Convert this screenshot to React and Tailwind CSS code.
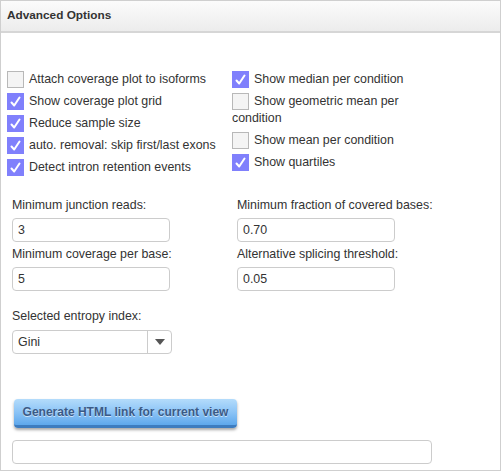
import React from "react";

const font = { fontFamily: '"Liberation Sans", Arial, sans-serif' };

function Check({ checked, label }) {
  return (
    <div className="text-[12.4px] leading-[17px] text-[#333] mb-[5px]">
      {checked ? (
        <span className="inline-flex align-top w-[17px] h-[17px] bg-[#8080fc] items-center justify-center mr-[5px]">
          <svg viewBox="0 0 17 17" className="w-[17px] h-[17px]">
            <path d="M4.5 9.5 L7.2 12.5 L12.5 4.5" fill="none" stroke="#fff" strokeWidth="2" strokeLinecap="round" strokeLinejoin="round" />
          </svg>
        </span>
      ) : (
        <span className="inline-block align-top w-[17px] h-[17px] bg-[#f4f4f4] border border-[#b8b8b8] mr-[5px]" />
      )}
      {label}
    </div>
  );
}

function Field({ label, value }) {
  return (
    <div className="mb-[5px]">
      <div className="text-[12.4px] leading-[15px] text-[#333] mb-[5px]">{label}</div>
      <div className="w-[158px] h-[24px] border border-[#ccc] rounded-[4px] px-[5px] flex items-center text-[12.4px] text-[#333] bg-white">
        {value}
      </div>
    </div>
  );
}

export default function App() {
  return (
    <div style={font} className="w-[501px] h-[471px] bg-white border border-[#cfcfcf] flex flex-col">
      <div className="h-[32px] border-b-2 border-[#d6d6d6] bg-gradient-to-b from-[#fbfbfb] to-[#ececec] flex items-center px-[6px]">
        <span className="text-[11.8px] font-bold text-[#333]">Advanced Options</span>
      </div>

      <div className="flex pt-[38px] pl-[6px]">
        <div className="w-[225px]">
          <Check label="Attach coverage plot to isoforms" />
          <Check checked label="Show coverage plot grid" />
          <Check checked label="Reduce sample size" />
          <Check checked label="auto. removal: skip first/last exons" />
          <Check checked label="Detect intron retention events" />
        </div>
        <div className="w-[212px]">
          <Check checked label="Show median per condition" />
          <Check label="Show geometric mean per condition" />
          <Check label="Show mean per condition" />
          <Check checked label="Show quartiles" />
        </div>
      </div>

      <div className="flex pl-[11px] pt-[17px]">
        <div className="w-[225px]">
          <Field label="Minimum junction reads:" value="3" />
          <Field label="Minimum coverage per base:" value="5" />
        </div>
        <div>
          <Field label="Minimum fraction of covered bases:" value="0.70" />
          <Field label="Alternative splicing threshold:" value="0.05" />
        </div>
      </div>

      <div className="pl-[11px] pt-[13px]">
        <div className="text-[12.4px] leading-[15px] text-[#333] mb-[6px]">Selected entropy index:</div>
        <div className="w-[160px] h-[24px] border border-[#ccc] rounded-[4px] flex items-center text-[12.4px] text-[#333]">
          <span className="flex-1 px-[5px]">Gini</span>
          <span className="w-[24px] h-full border-l border-[#ccc] flex items-center justify-center">
            <svg viewBox="0 0 10 6" className="w-[10px] h-[6px]">
              <path d="M0 0 L10 0 L5 6 Z" fill="#555" />
            </svg>
          </span>
        </div>
      </div>

      <div className="pl-[13px] pt-[45px]">
        <button className="w-[223px] h-[29px] rounded-[4px] bg-gradient-to-b from-[#b4dcfb] via-[#8cc4f6] to-[#5ea8ec] border-b-[3px] border-[#3d7cbf] shadow-[0_2px_3px_rgba(0,0,0,0.35)] text-[12px] font-bold text-[#3b5a86] [text-shadow:0_1px_0_rgba(255,255,255,0.6)]">
          Generate HTML link for current view
        </button>
      </div>

      <div className="pl-[11px] pt-[12px]">
        <div className="w-[420px] h-[24px] border border-[#ccc] rounded-[4px] bg-white" />
      </div>
    </div>
  );
}
